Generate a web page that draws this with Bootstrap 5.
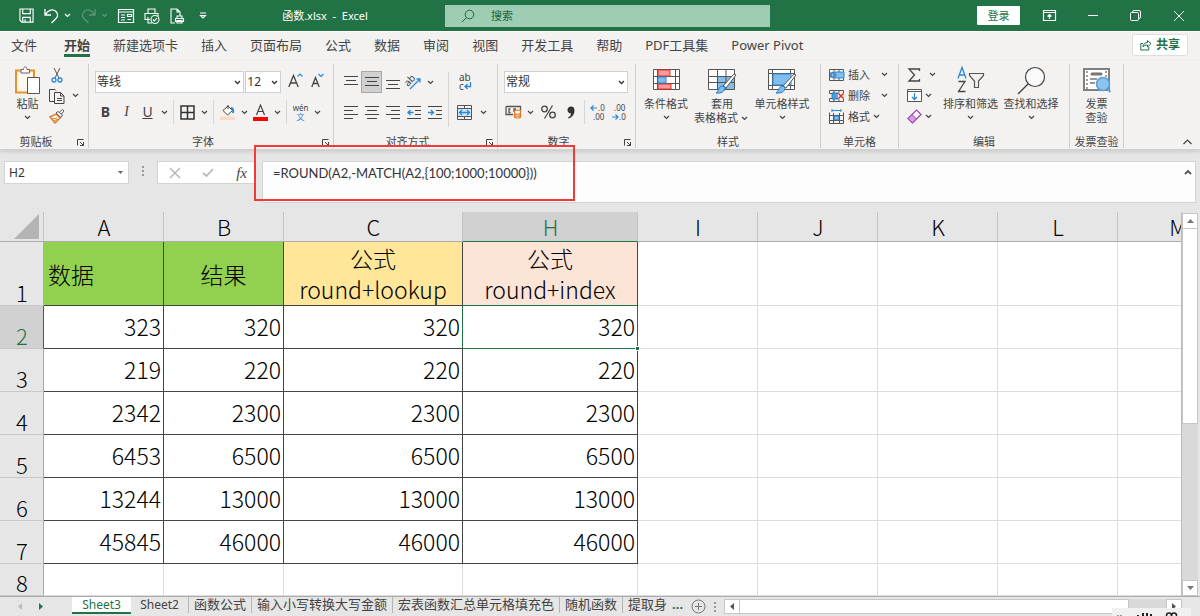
<!DOCTYPE html>
<html lang="zh-CN">
<head>
<meta charset="utf-8">
<meta name="viewport" content="width=device-width, initial-scale=1">
<title>函数.xlsx - Excel</title>
<link href="https://cdn.jsdelivr.net/npm/bootstrap@5.3.0/dist/css/bootstrap.min.css" rel="stylesheet">
<style>
:root { --xl: #217346; --ink: #444; --blue: #2b88d8; --pane: #f3f2f1; --chrome: #e6e6e6; }
body { font-family: "Noto Sans", "Noto Sans CJK SC", sans-serif; font-size: 11px; line-height: 14px; color: var(--ink); background: var(--chrome); }
button { background: none; border: 0; padding: 0; color: inherit; line-height: inherit; }
svg { display: block; flex: none; fill: none; stroke: currentColor; overflow: visible; }
.titlebar { height: 31px; background: var(--xl); }
.quick { gap: 10px; padding-left: 19px; }
.doc-title { padding-right: 2px; }
.search-wrap { width: 325px; height: 22px; background: #9fcdb3; color: #1c643c; }
.search-wrap input { background: none; border: 0; outline: 0; color: #1c643c; font-size: 11px; padding: 0; }
.search-wrap input::placeholder { color: #1c643c; opacity: 1; }
.winbar { width: 430px; }
.login { width: 43px; height: 19px; background: #fff; color: var(--xl); border-radius: 1px; }
.win { width: 43px; height: 30px; }
.menu { height: 30px; background: var(--pane); border-top: 1px solid #fff; font-size: 13px; gap: 23px; padding: 0 12px 0 11px; }
.menu a { color: var(--ink); line-height: 18px; padding-top: 4px; height: 25px; text-decoration: none; white-space: nowrap; }
.menu a.on { font-weight: 700; border-bottom: 3px solid var(--xl); }
.share { width: 56px; height: 22px; margin-top: 2px; background: #fff; border: 1px solid #e1dfdd; border-radius: 2px; color: var(--xl); font-size: 12px; font-weight: 700; }
.ribbon { height: 89px; background: var(--pane); padding-top: 3px; border-bottom: 1px solid #d0d0d0; box-shadow: 0 2px 4px #ccc; }
.rgroup { height: 84px; border-right: 1px solid #d0cecc; padding: 0 6px; flex: none; }
.rgroup.tight { padding: 0 4px; }
.rbody { height: 71px; }
.rfoot { height: 14px; display: grid; grid-template-columns: 12px 1fr 12px; text-align: center; white-space: nowrap; margin: 0 -6px; align-items: center; }
.line1 { height: 22px; margin-top: 7px; }
.line2 { height: 24px; margin-top: 7px; }
.ib { width: 21px; height: 22px; display: flex; align-items: center; justify-content: center; font-size: 14px; color: var(--ink); }
.ib.on { background: #d0d0d0; outline: 1px solid #a8a8a8; outline-offset: -1px; }
.ib.wide { width: 25px; }
.cv { width: 12px; display: flex; align-items: center; justify-content: center; }
.vsep { width: 1px; margin: 0 3px; align-self: stretch; background: #d8d6d4; }
.combo { height: 22px; border: 1px solid #d0d0d0; background: #fff url("data:image/svg+xml,%3Csvg xmlns='http://www.w3.org/2000/svg' width='7' height='5'%3E%3Cpath d='M1 1l2.500 2.500L6 1' fill='none' stroke='%23333' stroke-width='1.300'/%3E%3C/svg%3E") no-repeat right 2px center; appearance: none; border-radius: 0; font-size: 12px; color: #333; padding: 0 1px; line-height: 18px; }
.combo.fontname { width: 150px; }
.combo.fontsize { width: 36px; margin-left: 1px; }
.combo.numfmt { width: 124px; }
.big { display: flex; flex-direction: column; align-items: center; white-space: nowrap; padding-top: 2px; }
.big svg.pic { margin-bottom: 2px; }
.stack > * { height: 21px; display: flex; align-items: center; }
.fbar { height: 62px; padding: 11px 4px 0; }
.fbox { height: 23px; background: #fff; border: 1px solid #d4d4d4; }
.fbox input { border: 0; outline: 0; width: 100px; font-size: 12px; padding: 0 0 0 4px; color: #333; background: none; }
.formula { height: 42px; width: 100%; display: block; border: 1px solid #d4d4d4; resize: none; outline: 0; padding: 1px 10px; font: 13px/20px Lato, "Noto Sans", sans-serif; color: #333; background: #fdfdfd; overflow: hidden; }
.redmark { left: -8px; top: -16px; width: 321px; height: 56px; border: 2px solid #f23a36; pointer-events: none; }
.gridwrap { border-right: 1px solid #bbb; background: #fff; }
.sheet { table-layout: fixed; width: 1238px; border-collapse: separate; border-spacing: 0; font: 300 23px/31px "Noto Sans CJK SC", sans-serif; color: #000; }
.sheet th { font-weight: 300; text-align: center; padding: 0 0 0 1px; background: var(--chrome); }
.sheet thead th { height: 30px; line-height: 29px; font-size: 22px; border-bottom: 1px solid #ababab; border-right: 1px solid #c4c4c4; }
.sheet thead th.on { background: #d1d1d1; color: var(--xl); border-bottom-color: var(--xl); }
.sheet tbody th { vertical-align: bottom; font-size: 22px; line-height: 24px; padding-bottom: 1px; border-right: 1px solid #ababab; border-bottom: 1px solid #c8c8c8; }
.sheet tbody th.on { background: #d1d1d1; color: var(--xl); border-right-color: var(--xl); }
.sheet td { height: 43px; padding: 0 2px 2px; text-align: right; border-right: 1px solid #dcdcdc; border-bottom: 1px solid #dcdcdc; }
.sheet .hd td { height: 64px; text-align: center; padding-top: 1px; padding-bottom: 0; }
.sheet .last td { height: 32px; }
.sheet td.d { border-color: #444; }
.sheet td.green { background: #92d050; }
.sheet td.gold { background: #ffe699; }
.sheet td.pink { background: #fce4d6; }
.sheet td.sel { border-color: var(--xl); box-shadow: -1px -1px 0 var(--xl); }
.grip { right: -3px; bottom: -3px; width: 5px; height: 5px; background: var(--xl); border: 1px solid #fff; }
.vscroll { width: 16px; margin: 1px 2px 0 0; background: #d9d9d9; }
.sbtn { background: #fff; border: 1px solid #c6c6c6; display: flex; align-items: center; justify-content: center; }
.vscroll .sbtn { height: 16px; }
.vthumb { height: 195px; background: #fff; border: 1px solid #c6c6c6; border-top: 0; }
.foot { height: 20px; border-top: 1px solid #ababab; background: var(--chrome); font-size: 13px; line-height: 15px; }
.stab { color: var(--ink); text-decoration: none; padding: 0 5px; white-space: nowrap; border-right: 1px solid #b5b5b5; height: 16px; }
.stab.on { background: #fff; color: var(--xl); font-size: 12px; width: 59px; padding: 0; text-align: center; height: 17px; border: 0; border-bottom: 2px solid var(--xl); }
.stab.second { font-size: 12px; width: 58px; text-align: center; }
.hscroll { height: 15px; background: #d9d9d9; margin: 2px 18px 0 0; }
.hscroll .sbtn { width: 16px; }
.hthumb { width: 85%; background: #fff; border: 1px solid #c6c6c6; border-left: 0; }
.tray { right: 9px; bottom: 0; width: 79px; height: 8px; background: #f0f0f0; }
.tray svg { overflow: hidden; }
</style>
</head>
<body class="vh-100 d-flex flex-column overflow-hidden">
<svg width="0" height="0" class="position-absolute">
  <symbol id="chev" viewBox="0 0 7 5"><path d="M1 1l2.500 2.500L6 1" stroke-width="1.200"/></symbol>
  <symbol id="launch" viewBox="0 0 9 9"><path d="M1.500 7.500v-6h6M4 4l3.500 3.500M7.500 4v3.500H4"/></symbol>
</svg>

<header class="titlebar d-flex align-items-center text-white flex-shrink-0">
  <div class="quick d-flex align-items-center">
    <button aria-label="保存"><svg width="15" height="15" viewBox="0 0 16 16" stroke-width="1.200"><path d="M1 1h14v14H3l-2-2zM4 1v5h8V1M4 15v-5h8v5M6.500 12v3"/></svg></button>
    <button class="d-flex align-items-center" aria-label="撤消"><svg width="16" height="16" viewBox="0 0 16 16" stroke-width="1.300"><path d="M1 1v6h6M1.500 6.500C4 2 9 .5 12 3.500s1.500 6-1 8L7.500 15"/></svg><svg class="ms-1" width="7" height="5"><use href="#chev"/></svg></button>
    <button class="d-flex align-items-center opacity-25" aria-label="恢复"><svg width="16" height="16" viewBox="0 0 16 16" stroke-width="1.300"><path d="M14 1v6H8M13.500 6.500C11 2 6 .5 3 3.500s-1.500 6 1 8L7.500 15"/></svg><svg class="ms-1" width="7" height="5"><use href="#chev"/></svg></button>
    <button aria-label="窗体"><svg width="16" height="14" viewBox="0 0 16 14"><path d="M.5.500h15v13H.5zM.5 3h15M3 6h4M3 8.500h4M3 11h4M9.500 5.500h4v2h-4zM9.500 10.500h3.500" stroke-width="1.200"/></svg></button>
    <button aria-label="打印预览"><svg width="16" height="16" viewBox="0 0 16 16" stroke-width="1.100"><path d="M4 5V1h7v4M6 11.500H1v-6h13v3M4 9v6h4"/><circle cx="11" cy="11.500" r="4"/><path d="M9 11.500l1.500 1.500 2.500-3"/></svg></button>
    <button aria-label="快速打印"><svg width="15" height="16" viewBox="0 0 15 16" stroke-width="1.100"><path d="M5 15H1V1h6l3 3v4M7 1v3h3M7 10V8h5v2M5.500 10.500h8v3h-8zM7 12.500h5V15H7z"/></svg></button>
    <button class="ms-1" aria-label="自定义快速访问工具栏"><svg width="8" height="7" viewBox="0 0 8 7"><path d="M1 1h6M1.500 3.500h5L4 6z" stroke-width="1.100"/></svg></button>
  </div>
  <div class="doc-title flex-fill text-center">函数.xlsx &nbsp;-&nbsp; Excel</div>
  <label class="search-wrap d-flex align-items-center ps-3 gap-3"><svg width="14" height="14" viewBox="0 0 14 14"><circle cx="8.500" cy="5.500" r="4.300"/><path d="M5.500 8.500L1 13"/></svg><input type="text" placeholder="搜索" aria-label="搜索"></label>
  <div class="winbar d-flex align-items-center justify-content-end">
    <button class="login me-2">登录</button>
    <button class="win d-flex align-items-center justify-content-center" aria-label="功能区显示选项"><svg width="13" height="11" viewBox="0 0 13 11"><path d="M.5.500h12v10H.5zM.5 2.500h12M6.500 9V4.500M4.500 6.500l2-2 2 2" stroke-width="1.200"/></svg></button>
    <button class="win d-flex align-items-center justify-content-center" aria-label="最小化"><svg width="10" height="2"><path d="M0 .500h10"/></svg></button>
    <button class="win d-flex align-items-center justify-content-center" aria-label="还原"><svg width="11" height="11" viewBox="0 0 11 11"><rect x=".5" y="2.500" width="8" height="8" rx="1"/><path d="M2.500 2.500V2A1.500 1.500 0 0 1 4 .5h5A1.500 1.500 0 0 1 10.500 2v5A1.500 1.500 0 0 1 9 8.500"/></svg></button>
    <button class="win d-flex align-items-center justify-content-center" aria-label="关闭"><svg width="10" height="10"><path d="M0 0l10 10M10 0L0 10"/></svg></button>
  </div>
</header>

<nav class="menu d-flex align-items-start flex-shrink-0">
  <a href="#" class="me-1">文件</a><a href="#" class="on">开始</a><a href="#">新建选项卡</a><a href="#">插入</a><a href="#">页面布局</a><a href="#">公式</a><a href="#">数据</a><a href="#">审阅</a><a href="#">视图</a><a href="#">开发工具</a><a href="#">帮助</a><a href="#">PDF工具集</a><a href="#">Power Pivot</a>
  <button class="share ms-auto d-flex align-items-center justify-content-center gap-1"><svg width="12" height="12" viewBox="0 0 12 12"><path d="M3 4.500H.8V11h8V8M3 8c.3-3 2-4.500 4.500-4.500V1.500l3.500 3.200L7.500 8V6C5.500 6 4 6.500 3 8z"/></svg>共享</button>
</nav>

<section class="ribbon d-flex flex-shrink-0">
  <div class="rgroup" style="width:89px">
    <div class="rbody d-flex">
      <button class="big ms-2"><svg class="pic" width="27" height="29" viewBox="0 0 27 29"><path d="M2 4.500h18v22H2z" fill="#fff8ec" stroke="#e8912d" stroke-width="2"/><path d="M7 7V3.500h2.500C9.500 0 13 0 13 3.500h2.500V7z" fill="#fff" stroke="#666"/><path d="M13.500 11.500h12v16h-12z" fill="#fff" stroke="#555"/></svg>粘贴<svg class="mt-1" width="7" height="5"><use href="#chev"/></svg></button>
      <div class="stack ms-2">
        <div><button aria-label="剪切"><svg width="16" height="16" viewBox="0 0 16 16"><path d="M5 1l5 10M11 1L6 11" stroke="#555"/><circle cx="5" cy="13" r="2" stroke="#2b88d8" stroke-width="1.300"/><circle cx="11" cy="13" r="2" stroke="#2b88d8" stroke-width="1.300"/></svg></button></div>
        <div><button class="d-flex align-items-center" aria-label="复制"><svg width="16" height="16" viewBox="0 0 16 16"><path d="M5 13.500H.5v-12H6l1 1M5.500 4.500h6l3.500 3.500v7.500H5.500zM11.500 4.500V8H15M8 10.500h5M8 12.500h5"/></svg><span class="cv ms-1"><svg width="7" height="5"><use href="#chev"/></svg></span></button></div>
        <div><button aria-label="格式刷"><svg width="16" height="15" viewBox="0 0 16 15"><path d="M1 8l6-3 4 4-5 5z" fill="#fff" stroke="#e07a1f" stroke-width="1.400"/><path d="M3 10l5-1M5 12l4-2" stroke="#e07a1f"/><path d="M7 4l2-1.500L13.500 6 12 8.500zM10.500 3l3-2.500 1.500 1.500L12.500 5" fill="#fff" stroke="#555"/></svg></button></div>
      </div>
    </div>
    <div class="rfoot"><span></span><span class="pe-3">剪贴板</span><button aria-label="剪贴板选项"><svg width="9" height="9"><use href="#launch"/></svg></button></div>
  </div>

  <div class="rgroup" style="width:245px">
    <div class="rbody ps-0 d-flex flex-column">
      <div class="line1 d-flex"><select class="combo fontname" aria-label="字体"><option>等线</option></select><select class="combo fontsize" aria-label="字号"><option>12</option></select>
        <button class="ib ms-1" aria-label="增大字号"><svg width="15" height="16" viewBox="0 0 15 16"><path d="M.8 13L5.500 1.500 10.200 13M2.500 9h6" stroke-width="1.300"/><path d="M9.500 2.500L12 0l2.500 2.500" stroke="#2b88d8" stroke-width="1.200"/></svg></button>
        <button class="ib" aria-label="减小字号"><svg width="15" height="16" viewBox="0 0 15 16"><path d="M2.800 13L6.500 3.500 10.200 13M4.200 9.500h4.600" stroke-width="1.300"/><path d="M9.500 0L12 2.500 14.500 0" stroke="#2b88d8" stroke-width="1.200"/></svg></button></div>
      <div class="line2 d-flex align-items-center">
        <button class="ib fw-bold">B</button><button class="ib fst-italic" style="font-family:'Liberation Serif',serif">I</button><button class="ib text-decoration-underline">U</button><button class="cv" aria-label="下划线选项"><svg width="7" height="5"><use href="#chev"/></svg></button><span class="vsep"></span>
        <button class="ib" aria-label="边框"><svg width="15" height="15"><path d="M1 1h13v13H1zM7.500 1v13M1 7.500h13" stroke="#333" stroke-width="1.500"/></svg></button><button class="cv" aria-label="边框选项"><svg width="7" height="5"><use href="#chev"/></svg></button><span class="vsep"></span>
        <button class="ib" aria-label="填充颜色"><svg width="16" height="16" viewBox="0 0 16 16"><path d="M3 6.500L8 2l4.500 4.500L7.500 11z" fill="#fff"/><path d="M8 5V1"/><path d="M11 4c2 0 2.500 2 2 5" stroke="#2b88d8" stroke-width="2"/><path d="M0 12.500h15v3.500H0z" fill="#fbd9c4" stroke="none"/></svg></button><button class="cv" aria-label="填充选项"><svg width="7" height="5"><use href="#chev"/></svg></button>
        <button class="ib" aria-label="字体颜色"><svg width="15" height="17" viewBox="0 0 15 17"><path d="M3.500 11L7.500 1l4 10M5 7.500h5" stroke-width="1.200"/><path d="M0 13h15v4H0z" fill="#f00" stroke="none"/></svg></button><button class="cv" aria-label="字体颜色选项"><svg width="7" height="5"><use href="#chev"/></svg></button><span class="vsep"></span>
        <button class="ib flex-column" style="font-size:8px;line-height:9px"><span>wén</span><span style="color:var(--blue)">文</span></button><button class="cv" aria-label="拼音选项"><svg width="7" height="5"><use href="#chev"/></svg></button>
      </div>
    </div>
    <div class="rfoot"><span></span><span class="pe-3">字体</span><button aria-label="字体选项"><svg width="9" height="9"><use href="#launch"/></svg></button></div>
  </div>

  <div class="rgroup" style="width:164px">
    <div class="rbody d-flex">
      <div>
        <div class="line1 d-flex align-items-center">
          <button class="ib" aria-label="顶端对齐"><svg width="14" height="14"><path d="M0 1.500h14M2 5.500h10M0 9.500h14"/></svg></button><button class="ib on" aria-label="垂直居中"><svg width="14" height="14"><path d="M0 2.500h14M2 6.500h10M0 10.500h14"/></svg></button><button class="ib" aria-label="底端对齐"><svg width="14" height="14"><path d="M0 5.500h14M2 9.500h10M0 13.500h14"/></svg></button>
          <button class="ib" aria-label="方向"><svg width="17" height="17" viewBox="0 0 17 17"><text x="0" y="10" font-size="10" transform="rotate(-45 5 8)" fill="#444" stroke="none">ab</text><path d="M5 15L15 5M11.500 5H15v3.500" stroke="#2b88d8" stroke-width="1.300"/></svg></button><button class="cv" aria-label="方向选项"><svg width="7" height="5"><use href="#chev"/></svg></button>
        </div>
        <div class="line2 d-flex align-items-center">
          <button class="ib" aria-label="左对齐"><svg width="14" height="14"><path d="M0 1.500h14M0 5.500h9M0 9.500h14M0 13.500h9"/></svg></button><button class="ib" aria-label="居中"><svg width="14" height="14"><path d="M0 1.500h14M2 5.500h10M0 9.500h14M2 13.500h10"/></svg></button><button class="ib" aria-label="右对齐"><svg width="14" height="14"><path d="M0 1.500h14M5 5.500h9M0 9.500h14M5 13.500h9"/></svg></button>
          <button class="ib" aria-label="减少缩进"><svg width="14" height="14"><path d="M0 1.500h14M8 5.500h6M8 9.500h6M0 13.500h14"/><path d="M6.500 7.500H1M3.500 5L1 7.500 3.500 10" stroke="#2b88d8" stroke-width="1.300"/></svg></button><button class="ib" aria-label="增加缩进"><svg width="14" height="14"><path d="M0 1.500h14M8 5.500h6M8 9.500h6M0 13.500h14"/><path d="M0 7.500h5.500M3 5l2.500 2.500L3 10" stroke="#2b88d8" stroke-width="1.300"/></svg></button>
        </div>
      </div>
      <span class="vsep mt-2 mb-2"></span>
      <div>
        <div class="line1"><button class="ib wide" aria-label="自动换行"><svg width="14" height="18" viewBox="0 0 14 18"><text x="1" y="8" font-size="10" fill="#444" stroke="none">ab</text><text x="1" y="17" font-size="10" fill="#444" stroke="none">c</text><path d="M12.500 9v4.500H7M9.500 11L7 13.500 9.500 16" stroke="#2b88d8" stroke-width="1.300"/></svg></button></div>
        <div class="line2 d-flex align-items-center"><button class="ib wide" aria-label="合并后居中"><svg width="15" height="15"><path d="M.5.500h14v14H.5zM.5 3.500h14M.5 11.500h14M7.500 0v3.500M7.500 11.500V15" stroke="#555"/><path d="M1 4h13v7H1z" fill="#cfe6f8" stroke="none"/><path d="M2.500 7.500h10M5 5L2.500 7.500 5 10M10 5l2.500 2.500L10 10" stroke="#2b88d8" stroke-width="1.300"/></svg></button><button class="cv" aria-label="合并选项"><svg width="7" height="5"><use href="#chev"/></svg></button></div>
      </div>
    </div>
    <div class="rfoot"><span></span><span class="pe-3">对齐方式</span><button aria-label="对齐选项"><svg width="9" height="9"><use href="#launch"/></svg></button></div>
  </div>

  <div class="rgroup" style="width:138px">
    <div class="rbody d-flex flex-column">
      <div class="line1 d-flex"><select class="combo numfmt" aria-label="数字格式"><option>常规</option></select></div>
      <div class="line2 d-flex align-items-center">
        <button class="ib" aria-label="会计数字格式"><svg width="16" height="14" viewBox="0 0 16 14"><path d="M0 1.500h14.500v4M0 1.500v8h7M4.500 4H3v3.500h1.500M10 4H8v3" stroke="#555" stroke-width="1.300"/><path d="M8.500 6c0-1.300 6-1.300 6 0v6c0 1.300-6 1.300-6 0zM8.500 8.500c1 1 5 1 6 0M8.500 10.500c1 1 5 1 6 0" fill="#fff" stroke="#e8761e" stroke-width="1.200"/></svg></button><button class="cv" aria-label="货币选项"><svg width="7" height="5"><use href="#chev"/></svg></button>
        <button class="ib wide" aria-label="百分比样式"><svg width="15" height="14"><circle cx="3.500" cy="4" r="2.800" stroke-width="1.300"/><circle cx="11.500" cy="10" r="2.800" stroke-width="1.300"/><path d="M11.500.500l-8 13" stroke-width="1.200"/></svg></button><button class="ib" aria-label="千位分隔样式"><svg width="8" height="13"><path d="M4 .5C6.500.5 7.500 2 7.500 4.500c0 4-2.500 7-6 8l-.5-1C3 10.500 4 9 4 7.500 2 7.500.5 6.200.5 4S2 .5 4 .5z" fill="#333" stroke="none"/></svg></button><span class="vsep"></span>
        <button class="ib" aria-label="增加小数位数"><svg width="16" height="18" viewBox="0 0 16 18"><text x="8" y="8" font-size="8" fill="#444" stroke="none">.0</text><text x="3" y="17" font-size="8" fill="#444" stroke="none">.00</text><path d="M7 5H1M3.500 2.500L1 5l2.500 2.500" stroke="#2b88d8" stroke-width="1.200"/></svg></button><button class="ib" aria-label="减少小数位数"><svg width="16" height="18" viewBox="0 0 16 18"><text x="3" y="8" font-size="8" fill="#444" stroke="none">.00</text><text x="8" y="17" font-size="8" fill="#444" stroke="none">.0</text><path d="M1 14h6M4.500 11.500L7 14l-2.500 2.500" stroke="#2b88d8" stroke-width="1.200"/></svg></button>
      </div>
    </div>
    <div class="rfoot"><span></span><span class="pe-3">数字</span><button aria-label="数字选项"><svg width="9" height="9"><use href="#launch"/></svg></button></div>
  </div>

  <div class="rgroup px-0" style="width:185px">
    <div class="rbody d-flex">
      <button class="big" style="width:60px"><svg class="pic" width="27" height="29" viewBox="0 0 27 29"><path d="M.5 3.500h26v20H.5zM.5 10.500h26M.5 17.500h26M4.500 3v21M22.500 3v21" fill="#fff" stroke="#555"/><path d="M5 4h12v6H5zM5 18h13v5H5z" fill="#ff9a9a" stroke="#e03030"/><path d="M5 11h8v6H5z" fill="#83bdec" stroke="#2b88d8"/></svg>条件格式<svg class="mt-1" width="7" height="5"><use href="#chev"/></svg></button>
      <button class="big" style="width:52px"><svg class="pic" width="29" height="29" viewBox="0 0 29 29"><path d="M.5 3.500h26v20H.5z" fill="#fff" stroke="#555"/><path d="M9 10h17v13H9z" fill="#83bdec" stroke="none"/><path d="M.5 10.500h26M.5 16.500h26M9.500 3v21M18 3v21" stroke="#555"/><path d="M28 9L18 22l-3-2L26 8z" fill="#fff" stroke="#555"/><path d="M17 21c0 5-4 6.500-9 6 3-1.500 2-6 6-7z" fill="#83bdec" stroke="#1f78c4"/></svg><span>套用</span><span class="d-flex align-items-center">表格格式<span class="cv"><svg width="7" height="5"><use href="#chev"/></svg></span></span></button>
      <button class="big" style="width:68px"><svg class="pic" width="29" height="29" viewBox="0 0 29 29"><path d="M.5 3.500h26v20H.5zM4.500 3v21M22.500 3v21M.5 7.500h26M.5 19.500h26" fill="#fff" stroke="#555"/><path d="M5 8h18v11H5z" fill="#83bdec" stroke="#2b88d8"/><path d="M28 9L18 22l-3-2L26 8z" fill="#fff" stroke="#555"/><path d="M17 21c0 5-4 6.500-9 6 3-1.500 2-6 6-7z" fill="#83bdec" stroke="#1f78c4"/></svg>单元格样式<svg class="mt-1" width="7" height="5"><use href="#chev"/></svg></button>
    </div>
    <div class="text-center">样式</div>
  </div>

  <div class="rgroup tight" style="width:78px">
    <div class="rbody stack ps-1">
      <div><button class="d-flex align-items-center"><svg width="15" height="14"><path d="M.5 1.500h14v11H.5zM.5 5h14M.5 9h14M5 1.500v11M10 1.500v11" fill="#fff" stroke="#555"/><path d="M6 4h9v6H6z" fill="#83bdec" stroke="#2b88d8"/><path d="M8 7H1M4 4L1 7l3 3" stroke="#2b88d8" stroke-width="1.200"/></svg><span class="ms-1">插入</span><span class="cv ms-2"><svg width="7" height="5"><use href="#chev"/></svg></span></button></div>
      <div><button class="d-flex align-items-center"><svg width="15" height="14"><path d="M.5 1.500h14M.5 12.500h14M.5 1.500v3h14v-3M.5 12.500v-3h14v3M5 1.500v11M10 1.500v11" stroke="#555"/><path d="M3 4h6v6H3z" fill="#4aa0e0" stroke="#1f78c4"/><path d="M9.500 4.500l5 5M14.500 4.500l-5 5" stroke="#f3f2f1" stroke-width="4"/><path d="M9.500 4.500l5 5M14.500 4.500l-5 5" stroke="#e03030" stroke-width="1.500"/></svg><span class="ms-1">删除</span><span class="cv ms-2"><svg width="7" height="5"><use href="#chev"/></svg></span></button></div>
      <div><button class="d-flex align-items-center"><svg width="15" height="15"><path d="M.5 3.500v11h14v-11M.5 6.500h14M.5 11.500h14M4.500 4v11M10.500 4v11" stroke="#555"/><path d="M5 7h5v4H5z" fill="#83bdec" stroke="#1f78c4"/><path d="M3 1.500h9M3 0v3M12 0v3" stroke="#2b88d8"/></svg><span class="ms-1">格式</span><span class="cv"><svg width="7" height="5"><use href="#chev"/></svg></span></button></div>
    </div>
    <div class="text-center">单元格</div>
  </div>

  <div class="rgroup tight" style="width:171px">
    <div class="rbody d-flex">
      <div class="stack ps-1" style="width:37px">
        <div><button class="d-flex align-items-center" aria-label="自动求和"><svg width="15" height="14"><path d="M12.500 3V1H2l5.500 6L2 13h10.500v-2" stroke-width="1.300"/></svg><span class="cv ms-1"><svg width="7" height="5"><use href="#chev"/></svg></span></button></div>
        <div><button class="d-flex align-items-center" aria-label="填充"><svg width="15" height="13"><path d="M.5.500h14v12H.5zM.5 2.500h14" fill="#fff" stroke="#555"/><path d="M7.500 4v6.500M5 8l2.500 2.500L10 8" stroke="#2b88d8" stroke-width="1.300"/></svg><span class="cv"><svg width="7" height="5"><use href="#chev"/></svg></span></button></div>
        <div><button class="d-flex align-items-center" aria-label="清除"><svg width="15" height="15"><path d="M1 9.500L9.500 1 14 5.500 5.500 14z" fill="#fff" stroke="#9b3fb0" stroke-width="1.200"/><path d="M1 9.500L5 5.500 9.500 10l-4 4z" fill="#d79be3" stroke="#9b3fb0"/></svg><span class="cv"><svg width="7" height="5"><use href="#chev"/></svg></span></button></div>
      </div>
      <button class="big" style="width:61px"><svg class="pic" width="27" height="29" viewBox="0 0 27 29"><path d="M1 12.500L5 1.500l4 11M2.500 9h5" stroke="#2b88d8" stroke-width="1.300"/><path d="M1.500 15.500H8l-6.500 10h7" stroke-width="1.300"/><path d="M12.500 7.500h14v2l-5 5.500v6.500h-4V15l-5-5.500z" stroke="#555" stroke-width="1.200"/></svg>排序和筛选<svg class="mt-1" width="7" height="5"><use href="#chev"/></svg></button>
      <button class="big" style="width:60px"><svg class="pic" width="29" height="29" viewBox="0 0 29 29"><circle cx="18" cy="11" r="9.500" fill="#fafafa" stroke-width="1.200"/><path d="M11 18L1 28" stroke-width="1.400"/></svg>查找和选择<svg class="mt-1" width="7" height="5"><use href="#chev"/></svg></button>
    </div>
    <div class="text-center">编辑</div>
  </div>

  <div class="rgroup px-0" style="width:54px">
    <div class="rbody"><button class="big w-100"><svg class="pic" width="29" height="29" viewBox="0 0 29 29"><path d="M2 3h25v21H2z" fill="#fff" stroke="#808080" stroke-width="2"/><path d="M5 5v18" stroke="#808080" stroke-width="1.500" stroke-dasharray="2 2"/><path d="M24 5v8" stroke="#808080" stroke-width="1.500" stroke-dasharray="2 2"/><path d="M10 8h9" stroke="#777" stroke-width="3" stroke-linecap="round"/><path d="M8 13h7M8 17h5" stroke="#777" stroke-width="1.500"/><circle cx="21" cy="18" r="6.500" fill="#8cc3f0" stroke="#5a9fd4" stroke-width="1.500"/><path d="M25.500 23l3 3" stroke="#5a9fd4" stroke-width="2"/></svg><span>发票</span><span>查验</span></button></div>
    <div class="text-center text-nowrap">发票查验</div>
  </div>
  <div class="flex-fill d-flex align-items-end justify-content-end pe-2 pb-1"><button aria-label="折叠功能区"><svg width="9" height="6"><path d="M.5 5L4.500 1l4 4" stroke-width="1.200"/></svg></button></div>
</section>

<section class="fbar d-flex flex-shrink-0">
  <div class="fbox d-flex align-items-center" style="width:125px"><input type="text" value="H2" aria-label="名称框"><svg class="ms-auto me-1" width="7" height="4"><path d="M1 0h5L3.500 3z" fill="#666" stroke="none"/></svg></div>
  <svg style="margin:5px 13px" width="2" height="12"><path d="M1 0v12" stroke="#999" stroke-width="2" stroke-dasharray="2 2"/></svg>
  <div class="fbox d-flex align-items-center justify-content-between px-2" style="width:99px"><button class="ms-1" aria-label="取消"><svg width="10" height="10"><path d="M0 0l10 10M10 0L0 10" stroke="#b8b8b8" stroke-width="1.500"/></svg></button><button aria-label="输入"><svg width="12" height="9"><path d="M1 5l3.500 3L11 1" stroke="#b8b8b8" stroke-width="1.800"/></svg></button><button class="fst-italic" style="font-family:'Liberation Serif',serif;font-size:15px" aria-label="插入函数">fx</button></div>
  <div class="position-relative flex-fill" style="margin-left:6px">
    <textarea class="formula" aria-label="编辑栏" spellcheck="false">=ROUND(A2,-MATCH(A2,{100;1000;10000}))</textarea>
    <button class="position-absolute" style="right:4px;top:8px" aria-label="折叠编辑栏"><svg width="8" height="6"><path d="M1 5l3-3 3 3" stroke="#555" stroke-width="1.800"/></svg></button>
    <div class="redmark position-absolute"></div>
  </div>
</section>

<main class="flex-fill d-flex overflow-hidden">
  <div class="gridwrap flex-fill overflow-hidden">
    <table class="sheet">
      <colgroup><col style="width:44px"><col style="width:120px"><col style="width:120px"><col style="width:179px"><col style="width:175px"><col><col><col><col><col></colgroup>
      <thead><tr><th><svg class="ms-auto me-1" width="25" height="25"><path d="M25 0v25H0z" fill="#b4b4b4" stroke="none"/></svg></th><th>A</th><th>B</th><th>C</th><th class="on">H</th><th>I</th><th>J</th><th>K</th><th>L</th><th>M</th></tr></thead>
      <tbody>
        <tr class="hd"><th>1</th><td class="d green text-start ps-1">数据</td><td class="d green">结果</td><td class="d gold">公式<br>round+lookup</td><td class="d pink">公式<br>round+index</td><td></td><td></td><td></td><td></td><td></td></tr>
        <tr><th class="on">2</th><td class="d">323</td><td class="d">320</td><td class="d">320</td><td class="d sel position-relative">320<span class="grip position-absolute"></span></td><td></td><td></td><td></td><td></td><td></td></tr>
        <tr><th>3</th><td class="d">219</td><td class="d">220</td><td class="d">220</td><td class="d">220</td><td></td><td></td><td></td><td></td><td></td></tr>
        <tr><th>4</th><td class="d">2342</td><td class="d">2300</td><td class="d">2300</td><td class="d">2300</td><td></td><td></td><td></td><td></td><td></td></tr>
        <tr><th>5</th><td class="d">6453</td><td class="d">6500</td><td class="d">6500</td><td class="d">6500</td><td></td><td></td><td></td><td></td><td></td></tr>
        <tr><th>6</th><td class="d">13244</td><td class="d">13000</td><td class="d">13000</td><td class="d">13000</td><td></td><td></td><td></td><td></td><td></td></tr>
        <tr><th>7</th><td class="d">45845</td><td class="d">46000</td><td class="d">46000</td><td class="d">46000</td><td></td><td></td><td></td><td></td><td></td></tr>
        <tr class="last"><th>8</th><td></td><td></td><td></td><td></td><td></td><td></td><td></td><td></td><td></td></tr>
      </tbody>
    </table>
  </div>
  <div class="vscroll d-flex flex-column flex-shrink-0">
    <button class="sbtn" aria-label="向上滚动"><svg width="7" height="4"><path d="M0 4h7L3.500 0z" fill="#777" stroke="none"/></svg></button>
    <div class="vthumb"></div>
    <button class="sbtn mt-auto" aria-label="向下滚动"><svg width="7" height="4"><path d="M0 0h7L3.500 4z" fill="#777" stroke="none"/></svg></button>
  </div>
</main>

<footer class="foot d-flex flex-shrink-0 position-relative">
  <div class="d-flex align-items-center flex-shrink-0" style="width:72px;padding-left:18px;gap:17px"><button aria-label="上一张"><svg width="4" height="7"><path d="M4 0v7L0 3.500z" fill="#bbb" stroke="none"/></svg></button><button aria-label="下一张"><svg width="4" height="7"><path d="M0 0v7l4-3.500z" fill="#217346" stroke="none"/></svg></button></div>
  <a href="#" class="stab on">Sheet3</a><a href="#" class="stab second">Sheet2</a><a href="#" class="stab">函数公式</a><a href="#" class="stab">输入小写转换大写金额</a><a href="#" class="stab">宏表函数汇总单元格填充色</a><a href="#" class="stab">随机函数</a><a href="#" class="stab border-0">提取身</a>
  <span class="fw-bold" style="color:var(--xl)">…</span>
  <button class="ms-2" aria-label="新工作表"><svg width="15" height="15"><circle cx="7.500" cy="7.500" r="6.500" stroke="#777"/><path d="M4 7.500h7M7.500 4v7" stroke="#777"/></svg></button>
  <svg class="align-self-center mx-2" width="2" height="10"><path d="M1 0v10" stroke="#999" stroke-width="2" stroke-dasharray="2 2"/></svg>
  <div class="hscroll flex-fill d-flex"><button class="sbtn" aria-label="向左滚动"><svg width="4" height="7"><path d="M4 0v7L0 3.500z" fill="#555" stroke="none"/></svg></button><div class="hthumb"></div><button class="sbtn ms-auto" aria-label="向右滚动"><svg width="4" height="7"><path d="M0 0v7l4-3.500z" fill="#555" stroke="none"/></svg></button></div>
  <div class="tray position-absolute"><svg width="79" height="8"><path d="M5 7.500h2M8 7.500h2" stroke="#999"/><path d="M26 7v1M31 5v3M35 5v3M39 6v2" stroke="#222" stroke-width="2"/><circle cx="57" cy="7.500" r="2.500" stroke="#222" stroke-width="1.500"/><circle cx="62" cy="7.500" r="2.500" stroke="#222" stroke-width="1.500"/></svg></div>
</footer>
<script src="https://cdn.jsdelivr.net/npm/bootstrap@5.3.0/dist/js/bootstrap.bundle.min.js"></script>
</body>
</html>
